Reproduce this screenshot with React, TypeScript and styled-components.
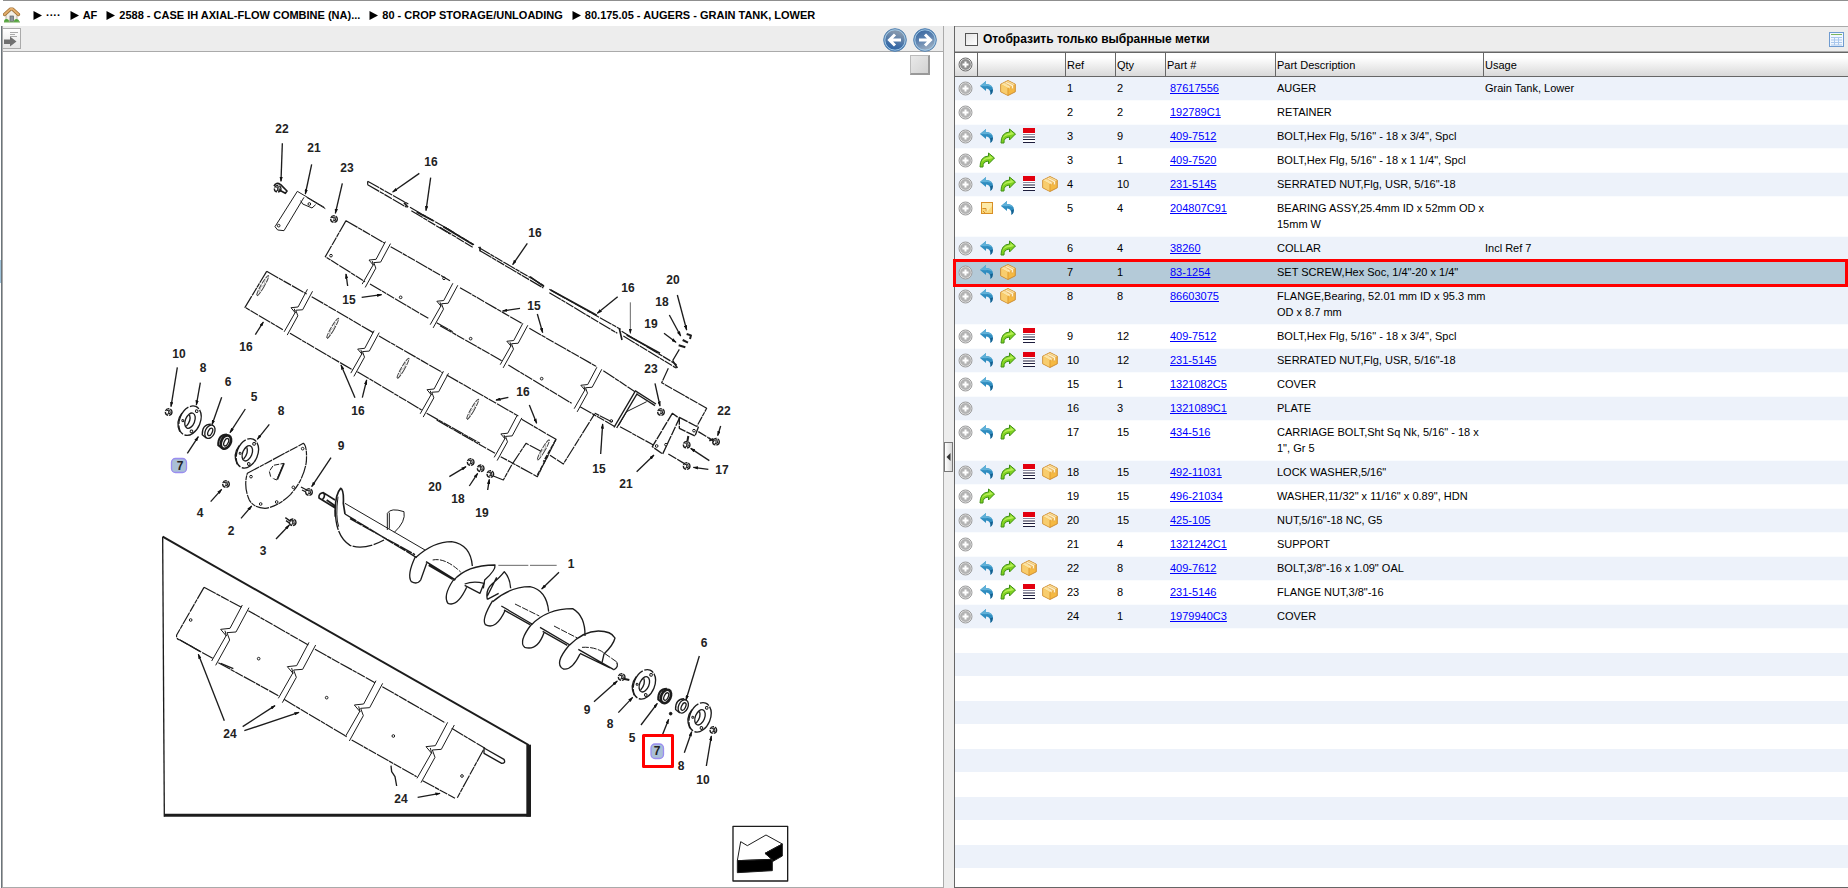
import React, { useId, useState } from 'react';
import styled, { createGlobalStyle, css } from 'styled-components';

const Global = createGlobalStyle`
  *, *::before, *::after { box-sizing: border-box; }
  html, body { margin: 0; padding: 0; }
  body {
    background: #ededed;
    color: #000;
    font: 11px/16px "Liberation Sans", Arial, sans-serif;
  }
`;

const Page = styled.div`
  min-height: 100vh;
  display: flex;
  flex-direction: column;
`;

/* ---------- breadcrumb ---------- */

const Breadcrumb = styled.nav`
  display: flex;
  align-items: center;
  gap: 9px;
  height: 26px;
  padding-top: 3px;
  margin-left: 3px;
  background: #fff;
  border-top: 1px solid #8f8f8f;
  box-shadow: -3px 0 0 #fff;
  flex: none;
`;

const HomeLink = styled.a`
  display: block;
  width: 18px;
  height: 16px;
  margin-right: 3px;
  line-height: 0;
`;

const Crumb = styled.a`
  display: flex;
  align-items: center;
  gap: 4px;
  color: #000;
  font-size: 11px;
  font-weight: bold;
  text-decoration: none;
  white-space: nowrap;
`;

/* ---------- split layout ---------- */

const Split = styled.div`
  flex: 1;
  display: grid;
  grid-template-columns: 3px minmax(0, 941fr) 10px minmax(0, 894fr);
`;

const EdgeStrip = styled.div`
  border-right: 1px solid #aaa;
  background:
    linear-gradient(#9fc3da, #9fc3da) 0 234px / 1px 23px no-repeat,
    linear-gradient(90deg, #fff 1px, #6b757b 1px);
`;

const DrawingPane = styled.section`
  display: flex;
  flex-direction: column;
  border: solid #aaa;
  border-width: 0 1px 1px 0;
  background: #fff;
`;

const DrawingToolbar = styled.div`
  flex: none;
  display: flex;
  justify-content: space-between;
  height: 26px;
  padding: 2px 6px 0 0;
  background: #ededed;
  border-bottom: 1px solid #aaa;
`;

const ToolButton = styled.button`
  width: 18px;
  height: 21px;
  padding: 0;
  border: solid #aaa;
  border-width: 1px 1px 1px 0;
  background: linear-gradient(#fff, #e4e4e4);
  line-height: 0;
`;

const NavButtons = styled.div`
  display: flex;
  gap: 6px;
`;

const RoundButton = styled.button`
  width: 24px;
  height: 24px;
  padding: 0;
  border: 0;
  background: none;
  line-height: 0;
`;

const Canvas = styled.div`
  position: relative;
  flex: 1;
  line-height: 0;
`;

const FitButton = styled.button`
  position: absolute;
  top: 3px;
  right: 13px;
  width: 20px;
  height: 20px;
  padding: 0;
  border: solid;
  border-width: 1px 2px 2px 1px;
  border-color: #bbb #999 #999 #bbb;
  background: linear-gradient(135deg, #e9e9e9, #d2d2d2);
`;

const Gutter = styled.div`
  display: flex;
  align-items: center;
  background: #ededed;
`;

const GutterHandle = styled.button`
  width: 9px;
  height: 30px;
  padding: 0;
  border: 1px solid #777;
  background: linear-gradient(90deg, #fff, #d8d8d8);
  line-height: 0;
`;

const PartsPane = styled.section`
  display: flex;
  flex-direction: column;
  border: solid #666;
  border-width: 0 0 1px 1px;
  background: #fff;
`;

const PartsToolbar = styled.div`
  flex: none;
  display: flex;
  align-items: center;
  justify-content: space-between;
  height: 26px;
  padding: 0 4px 0 10px;
  background: #ededed;
  border: solid #aaa;
  border-width: 1px 0;
`;

const FilterLabel = styled.label`
  display: flex;
  align-items: center;
  gap: 5px;
  font-size: 12px;
  font-weight: bold;
`;

const FilterBox = styled.input`
  appearance: none;
  width: 13px;
  height: 13px;
  margin: 0;
  border: 1px solid #555;
  background: linear-gradient(135deg, #e4e4e4, #fff);
  &:checked { background: #5a87b8; }
`;

const IconButton = styled.button`
  display: block;
  padding: 0;
  border: 0;
  background: none;
  line-height: 0;
`;

/* ---------- parts table ---------- */

const Table = styled.table`
  flex: none;
  width: 100%;
  table-layout: fixed;
  border-collapse: separate;
  border-spacing: 0;
`;

const Col = styled.col<{ $w?: number }>`
  ${({ $w }) => $w && css`width: ${$w}px;`}
`;

const HeadCell = styled.th<{ $mid?: boolean }>`
  height: 25px;
  padding: 0 1px;
  border: solid #666;
  border-width: 1px 1px 1px 0;
  background: linear-gradient(#fff 20%, #d9d9d9);
  font-weight: normal;
  text-align: left;
  &:last-child { border-right: 0; }
  ${({ $mid }) => $mid && css`padding: 0 3px;`}
`;

const Row = styled.tr<{ $shaded: boolean; $selected?: boolean }>`
  background: ${({ $shaded, $selected }) =>
    $selected ? '#b4cad8' : $shaded ? '#edf2fa' : '#fff'};
  ${({ $selected }) =>
    $selected &&
    css`
      position: relative;
      td { border-bottom-color: #b4cad8; }
      td:first-child::after {
        content: "";
        position: absolute;
        inset: -2px 0 -2px -2px;
        border: 3px solid #f00;
        pointer-events: none;
      }
    `}
`;

const Cell = styled.td<{ $inset?: boolean }>`
  padding: 3px 0 4px 1px;
  padding-left: ${({ $inset }) => ($inset ? 4 : 1)}px;
  border-bottom: 1px solid #fafcfe;
  vertical-align: top;
  white-space: pre;
`;

const IconRow = styled.div`
  display: flex;
  align-items: center;
  gap: 5px;
  height: 16px;
`;

const ExpandButton = styled(IconButton)`
  margin: 1px 0 0 2px;
`;

const PartLink = styled.a`
  color: #00f;
`;

const EmptyRows = styled.div`
  flex: 1;
  background: repeating-linear-gradient(#fff 0 24px, #edf2fa 24px 47px, #fff 47px 48px);
`;

/* ---------- icons ---------- */

const Home = () => (
  <svg width="18" height="16" viewBox="0 0 18 16">
    <path d="M3 8v6h11V8L8.500 3z" fill="#f3efe6" stroke="#a9a190" strokeWidth=".8" />
    <path d="M1.500 7.500l6-5.500h2l6 5.500" fill="none" stroke="#9a6a2c" strokeWidth="3.200" strokeLinejoin="round" strokeLinecap="round" />
    <path d="M1.500 7.500l6-5.500h2l6 5.500" fill="none" stroke="#e3ad6b" strokeWidth="1.800" strokeLinejoin="round" strokeLinecap="round" />
    <rect x="7" y="9" width="3.500" height="5.500" fill="#8d949b" stroke="#5c6268" strokeWidth=".7" />
    <path d="M1 15q0-3 2.500-3t2.500 2.700zM11 15q0-3 2.500-3t3 2.700z" fill="#4fa53c" />
    <path d="M1 15h16" stroke="#6aa84f" strokeWidth="1" />
  </svg>
);

const Wedge = () => (
  <svg width="9" height="9" viewBox="0 0 9 9">
    <path d="M.5 0L9 4.500.5 9z" fill="#000" />
  </svg>
);

const PaneArrow = () => (
  <svg width="17" height="19" viewBox="0 0 17 19">
    <path d="M7 3.500h8M7 5.500h5M7 7.500h7" stroke="#aaa" />
    <path d="M1 10.500h6V7.500l6.500 5-6.500 5V15H1z" fill="#707070" />
  </svg>
);

const RoundArrow = ({ forward }: { forward?: boolean }) => {
  const id = useId();
  return (
    <svg width="24" height="24" viewBox="0 0 24 24">
      <defs>
        <linearGradient id={id} x1="0" y1="0" x2={forward ? '.4' : '-.3'} y2="1">
          <stop offset="0" stopColor={forward ? '#2d5f9c' : '#8296ad'} />
          <stop offset=".55" stopColor={forward ? '#5e83b0' : '#3c6ca6'} />
          <stop offset="1" stopColor={forward ? '#9aacc0' : '#1f5ea6'} />
        </linearGradient>
      </defs>
      <circle cx="12" cy="12" r="11.300" fill={`url(#${id})`} stroke="#5484b4" strokeWidth="1" />
      <circle cx="12" cy="12" r="10.200" fill="none" stroke="#a3cbe8" strokeWidth="1" />
      <path
        d="M18 12H7.500M12 6.500L6.500 12l5.500 5.500"
        fill="none"
        stroke="#fff"
        strokeWidth="3"
        transform={forward ? 'rotate(180 12 12)' : undefined}
      />
    </svg>
  );
};

const Plus = ({ dark }: { dark?: boolean }) => (
  <svg width="15" height="15" viewBox="0 0 15 15">
    <circle cx="7.500" cy="7.500" r="6.500" fill="#e6e6e6" stroke={dark ? '#6f6f6f' : '#9d9d9d'} />
    <circle cx="7.500" cy="7.500" r="5" fill={dark ? '#8f8f8f' : '#b4b4b4'} stroke={dark ? '#7d7d7d' : '#a6a6a6'} strokeWidth=".6" />
    <path d="M7.500 4.500v6M4.500 7.500h6" stroke="#fff" strokeWidth="2" />
  </svg>
);

const Back = () => (
  <svg width="16" height="16" viewBox="0 0 16 16">
    <path d="M1 6l6-5v3q7 .5 7 6-.3 3-2.500 5 .5-6-4.500-6.500V11z" fill="#2f8dc0" />
    <path d="M1 6l6-5v3q5 .3 6.300 3.500Q10 5.300 6.500 6.300z" fill="#5fb0d8" />
    <path d="M14 9.500q0 3.500-2.500 5.500.5-3-.5-4.700z" fill="#15608f" />
  </svg>
);

const Forward = () => (
  <svg width="16" height="16" viewBox="0 0 16 16">
    <path
      d="M15.500 6L9.500 1v3Q1 4.500 1 15h3q-.5-5.500 5.500-6v3z"
      fill="#7fd11f"
      stroke="#3f8f16"
      strokeWidth="1"
      strokeLinejoin="round"
    />
    <path d="M14 6l-3.500-3v2Q4 5.500 2.500 10.500 5 6.800 10.500 7z" fill="#b5ee55" />
  </svg>
);

const List = () => (
  <svg width="16" height="16" viewBox="0 0 16 16">
    <rect x="2" y="0" width="12" height="15" fill="#fff" />
    <rect x="2" y="0" width="12" height="5" fill="#e3000f" />
    <path d="M2 6.500h12" stroke="#8a8aa0" />
    <path d="M2 9h12M2 11.500h12M2 14.500h12" stroke="#1d1d3c" />
  </svg>
);

const Box = () => (
  <svg width="16" height="16" viewBox="0 0 16 16">
    <path d="M8 .5l7.300 3.700v7.600L8 15.500.7 11.800V4.200z" fill="#f5b942" stroke="#c8862a" strokeWidth=".9" strokeLinejoin="round" />
    <path d="M8 .9L14.900 4.300 8 8 1.100 4.300z" fill="#fbe3a3" />
    <path d="M1.200 4.600L7.700 8v7L1.200 11.600z" fill="#f8cd6e" />
    <path d="M4.500 2.700L11.500 6.200v3l2-1V5.100L6.500 1.700zM7 4.500l3 1.500v3" fill="#fff3cf" stroke="#e0a03c" strokeWidth=".5" />
    <path d="M8 8v7.200" stroke="#d9942f" strokeWidth=".7" />
  </svg>
);

const Note = () => (
  <svg width="16" height="16" viewBox="0 0 16 16">
    <rect x="2.500" y="2.500" width="11" height="11" fill="#fbd87a" stroke="#d88f26" />
    <path d="M3 3h10v3L8 12H6V8H3z" fill="#fdeaa9" />
    <path d="M3.500 8.500h3.500v3M4 11l2 2" fill="none" stroke="#d88f26" />
  </svg>
);

const Grid = () => (
  <svg width="15" height="15" viewBox="0 0 15 15">
    <rect x=".5" y=".5" width="14" height="14" fill="#f2f8ff" stroke="#6f9bd0" />
    <path d="M2 2.500h11" stroke="#7cb55c" />
    <path d="M2 5.500h11M2 8h11M2 10.500h11M2 13h11M5.500 5v8M9.500 5v8" stroke="#a9c7ec" />
  </svg>
);

const markers = { b: Back, f: Forward, l: List, p: Box, n: Note };

/* ---------- exploded drawing ---------- */

const Sheet = styled.svg`
  display: block;
  width: 100%;
  height: auto;
  fill: none;
  stroke: #1c1c1c;
  stroke-width: 3;
  stroke-linejoin: round;

  text {
    fill: #222;
    stroke: none;
    font: bold 12px "Liberation Sans", Arial, sans-serif;
    text-anchor: middle;
  }
`;

const Outline = styled.path`
  stroke-dasharray: 40 2 14 2 26 3;
  stroke-width: 3.6px;
`;

/** A part drawing group; coordinates inside are thirds of a pixel. */
const Region = ({ x, y, children }: { x: number; y: number; children: React.ReactNode }) => (
  <g transform={`translate(${x} ${y}) scale(.33333)`}>{children}</g>
);

const Leaders = ({ d }: { d: number[][] }) => (
  <>
    {d.map(([x1, y1, x2, y2], i) => (
      <path key={i} d={`M${x1} ${y1}L${x2} ${y2}`} strokeWidth="4" markerEnd="url(#tip)" />
    ))}
  </>
);

const Breaks = ({ at, s }: { at: number[][]; s: number }) => (
  <>
    {at.map(([x, y], i) => (
      <g key={i} transform={`translate(${x} ${y}) scale(${s})`} strokeWidth={3 / s}>
        <path d="M-10-3L-47 67L-75 70L-58 90L-62 74M-58 88L-102 165" />
        <path d="M10 5L-29 78L-56 80L-48 102L-90 178" />
      </g>
    ))}
  </>
);

const Slots = ({ at }: { at: number[][] }) => (
  <>
    {at.map(([x, y], i) => (
      <g key={i} transform={`translate(${x} ${y}) rotate(30)`}>
        <ellipse rx="5" ry="35" strokeDasharray="16 3" strokeWidth="3" stroke="#444" />
        <path d="M-3-20L3-5L-3 8L2 22" stroke="#999" strokeWidth="2" />
      </g>
    ))}
  </>
);

const Nuts = ({ at }: { at: number[][] }) => (
  <>
    {at.map(([x, y], i) => (
      <g key={i} transform={`translate(${x} ${y})`}>
        <circle r="10" strokeWidth="4" strokeDasharray="14 3" />
        <path d="M-6-4L3-6L5 4L-4 6M0-4V5" strokeWidth="3" />
      </g>
    ))}
  </>
);

const Dots = ({ at }: { at: number[][] }) => (
  <>
    {at.map(([x, y], i) => (
      <circle key={i} cx={x} cy={y} r="4" strokeWidth="3" />
    ))}
  </>
);

const Flange = ({ x, y }: { x: number; y: number }) => (
  <g transform={`translate(${x} ${y}) rotate(22)`}>
    <ellipse rx="31" ry="46" strokeWidth="4" strokeDasharray="60 5 30 4" />
    <path d="M-31-12Q-40 20-16 42" strokeWidth="4" />
    <ellipse rx="14" ry="24" strokeWidth="4" />
    <path d="M-8-16Q4-2-4 20" strokeWidth="4" />
    <circle cx="8" cy="-34" r="4" />
    <circle cx="16" cy="28" r="4" />
    <circle cx="-20" cy="8" r="3" />
  </g>
);

const Bearing = ({ x, y, thick }: { x: number; y: number; thick?: boolean }) => (
  <g transform={`translate(${x} ${y}) rotate(25)`}>
    <path d="M-4-22Q-28-10-14 18L2 22" strokeWidth={thick ? 6 : 4} />
    <ellipse cx="3" rx="14" ry="21" strokeWidth={thick ? 8 : 4} />
    <ellipse cx="4" rx="6" ry="12" strokeWidth="4" />
  </g>
);

const callouts: [string, number, number][] = [
  ['22', 282, 129], ['21', 314, 148], ['23', 347, 168], ['16', 431, 162], ['15', 349, 300],
  ['16', 246, 347], ['10', 179, 354], ['8', 203, 368], ['6', 228, 382], ['16', 535, 233],
  ['16', 628, 288], ['20', 673, 280], ['18', 662, 302], ['19', 651, 324], ['15', 534, 306],
  ['23', 651, 369], ['16', 523, 392], ['22', 724, 411], ['15', 599, 469], ['17', 722, 470],
  ['21', 626, 484], ['16', 358, 411], ['5', 254, 397], ['8', 281, 411], ['9', 341, 446],
  ['4', 200, 513], ['2', 231, 531], ['3', 263, 551], ['20', 435, 487], ['18', 458, 499],
  ['19', 482, 513], ['24', 230, 734], ['24', 401, 799], ['1', 571, 564], ['6', 704, 643],
  ['9', 587, 710], ['8', 610, 724], ['5', 632, 738], ['8', 681, 766], ['10', 703, 780],
];

const Drawing = () => (
  <Sheet viewBox="3 52 940 835" role="img" aria-label="Augers - grain tank, lower">
    <defs>
      <marker id="tip" viewBox="0 0 16 10" refX="14" refY="5" markerWidth="16" markerHeight="10" markerUnits="userSpaceOnUse" orient="auto">
        <path d="M0 0L16 5L0 10z" fill="#111" stroke="none" />
      </marker>
    </defs>

    {/* cover plates and brackets, upper left */}
    <Region x={150} y={110}>
      <Leaders
        d={[
          [397, 100, 393, 214], [485, 163, 466, 252], [577, 220, 556, 310], [808, 190, 728, 246],
          [842, 203, 828, 302], [593, 528, 588, 492], [635, 562, 695, 554], [316, 674, 340, 636],
        ]}
      />
      <Nuts at={[[552, 327], [383, 236]]} />
      <path d="M372 228Q378 215 392 224L411 243L406 250L388 240" strokeWidth="5" />
      <path d="M442 244L375 350L383 360L402 362L462 262M442 244L523 292M470 262L526 296M452 272L458 282L486 294L497 284" />
      <Dots at={[[386, 347], [478, 282], [543, 437], [752, 562], [882, 505]]} />
      <Outline d="M653 214L775 282M653 224L770 292M653 214V224M780 292L910 366M784 302L900 372" />
      <path d="M762 278L774 292M800 306L850 332" strokeWidth="5" />
      <Outline d="M588 332L526 440L645 515M588 332L705 400M722 410L900 512M660 522L835 625M860 638L908 665" />
      <Outline d="M350 484L285 592L400 660M350 484L470 552M485 560L670 668M420 670L608 780M687 678L878 788" />
      <Breaks at={[[714, 397], [480, 540], [680, 664], [888, 786]]} s={0.76} />
      <Slots at={[[338, 527], [548, 655], [759, 775]]} />
    </Region>

    {/* cover plates and brackets, upper right */}
    <Region x={440} y={140}>
      <Leaders
        d={[
          [262, 310, 218, 374], [533, 470, 472, 520], [688, 525, 722, 588], [712, 465, 740, 570],
          [672, 580, 708, 607], [240, 505, 188, 513], [292, 522, 308, 578], [645, 730, 660, 798],
          [205, 772, 168, 780], [268, 795, 290, 850], [482, 942, 488, 852], [590, 995, 642, 945],
          [842, 858, 833, 887], [808, 962, 752, 925], [805, 988, 760, 982], [28, 1010, 78, 980],
          [88, 1038, 113, 1000], [143, 1050, 148, 1018],
        ]}
      />
      <path d="M571 487V580" strokeWidth="2" markerEnd="url(#tip)" />
      <Outline d="M15 262L102 314M0 262L98 322M115 322L312 437M120 332L310 444M328 448L542 568M328 458L532 580M545 574L710 674M550 588L708 684" />
      <path d="M10 260L100 314M270 410L312 440M332 450L470 526M560 585L660 640M698 662L712 684M120 320V334M538 566L546 600" strokeWidth="5" />
      <Outline d="M60 443L245 550M0 557L185 662M268 565L470 680M205 675L395 790M490 692L585 755M420 800L525 860" />
      <Breaks at={[[46, 432], [256, 552], [478, 684], [238, 830]]} s={0.74} />
      <path d="M585 755L522 862M592 760L530 864M585 752L648 792M590 762L645 797" strokeWidth="4" />
      <path d="M620 785L560 815L535 858" />
      <Dots at={[[92, 596], [305, 716], [514, 843], [650, 918], [678, 914], [762, 872]]} />
      <Outline d="M515 845L465 820L370 972L330 946M540 860L640 915M718 628L698 662M685 685L665 728L800 805L770 860" />
      <Outline d="M20 705L235 828M-10 840L165 940M245 838L348 898L292 1010L182 950M160 1008L190 1020L215 975L258 910L305 935" />
      <path d="M348 898L310 965M325 945L292 1005" strokeWidth="4" strokeDasharray="14 4" />
      <Slots at={[[98, 808], [310, 930]]} />
      <path d="M697 820L637 920L668 942L718 835zM718 832L775 862L765 888L718 865zM775 875L805 893M685 942L732 970" strokeWidth="4" strokeDasharray="28 3" />
      <path d="M716 616L736 622M728 600L744 608M740 582L753 586L750 597" strokeWidth="6" />
      <path d="M745 888L742 905" strokeWidth="6" />
      <Nuts at={[[663, 816], [740, 978], [740, 914], [828, 905], [92, 966], [122, 985], [151, 1002]]} />
      <path d="M805 893L822 905M808 902L820 896" strokeWidth="5" />
    </Region>

    {/* bearings, end cover and first auger flight */}
    <Region x={150} y={330}>
      <Leaders
        d={[
          [82, 112, 63, 230], [151, 158, 139, 225], [215, 202, 186, 284], [286, 237, 240, 308],
          [358, 283, 322, 328], [112, 370, 145, 320], [543, 383, 485, 470], [182, 515, 215, 478],
          [273, 565, 305, 528], [378, 627, 418, 585], [615, 203, 573, 105], [637, 203, 650, 150],
        ]}
      />
      <Outline d="M830 250L990 340" />
      <Nuts at={[[56, 246], [228, 462], [477, 486], [428, 577]]} />
      <path d="M453 471L470 480M456 480L468 486M406 563L422 574M408 572L420 580" strokeWidth="4" />
      <Flange x={120} y={272} />
      <Bearing x={177} y={304} />
      <Bearing x={225} y={335} thick />
      <Flange x={292} y={370} />
      <Outline d="M622 125L815 240" />
      <Outline d="M292 430L460 340Q472 348 469 395Q462 448 422 493Q385 530 345 535Q310 533 298 510Q280 470 292 430z" />
      <path d="M362 440L358 424L370 406L402 400L380 450L366 444" strokeDasharray="16 4" strokeWidth="3" />
      <path d="M402 400L382 448" strokeWidth="5" />
      <Dots at={[[458, 356], [303, 440], [430, 472], [380, 516], [332, 522]]} />
      <path d="M555 510L520 488Q505 490 507 504L556 534M520 488Q528 496 518 508M530 510L556 528" strokeWidth="5" />
      <path d="M556 560Q553 495 572 475Q582 480 580 520L585 552" strokeWidth="5" />
      <path d="M564 500Q556 560 566 590" />
      <path d="M556 540Q556 618 600 646Q642 662 702 630" strokeWidth="4" strokeDasharray="60 4" />
      <path d="M585 520L825 660" />
      <path d="M585 552L800 683M600 566L795 674" strokeWidth="4" strokeDasharray="40 3" />
      <path d="M712 600V550Q722 532 762 545Q768 575 733 607M718 548V596" />
    </Region>

    {/* inset panel and middle auger flights */}
    <Region x={150} y={520}>
      <path d="M38 50L1136 675" strokeWidth="6" />
      <path d="M38 50L43 890" strokeWidth="4" />
      <path d="M43 886H1142" strokeWidth="9" />
      <path d="M1136 674V890" strokeWidth="14" />
      <Outline d="M162 202L80 345Q78 358 90 360L188 415M162 202L275 262M295 272L475 375M495 388L675 488M697 500L885 608M905 625L1005 685" />
      <Outline d="M205 428L385 527M402 538L590 650M605 660L800 770M818 782L915 835M1000 690L922 833" />
      <path d="M90 360L150 394M212 430L250 446M1002 684L1062 718Q1068 730 1055 730L1002 700z" strokeWidth="4" />
      <Breaks at={[[287, 258], [487, 370], [688, 485], [903, 610]]} s={1} />
      <Dots at={[[122, 300], [326, 416], [530, 533], [730, 648], [936, 768]]} />
      <Leaders d={[[223, 602, 145, 403], [278, 620, 375, 557], [283, 632, 447, 577], [803, 832, 870, 820]]} />
      <path d="M740 798L735 770L725 755L723 737" strokeWidth="4" />
      <path d="M798 112Q850 65 905 65Q962 74 967 138" strokeWidth="4" />
      <path d="M796 110Q770 165 784 185Q802 195 812 180L830 130" strokeWidth="4" />
      <path d="M828 125L916 180M836 136L908 178" strokeWidth="5" />
      <path d="M848 120Q885 112 932 156" strokeDasharray="18 4" />
      <path d="M910 182Q950 135 1035 135Q1038 150 1004 180L1000 205" strokeWidth="4" />
      <path d="M910 180Q878 228 894 250Q922 262 950 202" strokeWidth="4" />
      <path d="M944 192Q970 182 1002 190L990 220L944 196" strokeWidth="4" />
      <path d="M1012 238Q1006 210 1026 192Q1050 172 1063 155Q1080 172 1082 205M1040 172L1012 228M1012 238L1046 220" strokeWidth="4" />
    </Region>

    {/* right-hand auger flights and bearings */}
    <Region x={450} y={530}>
      <path d="M128 215Q180 170 240 170Q290 180 296 245" strokeWidth="4" />
      <path d="M128 212Q94 268 106 284Q138 302 166 240" strokeWidth="4" />
      <path d="M154 228L246 282M162 240L240 284" strokeWidth="4" />
      <path d="M195 222L268 258M312 288L382 324M396 352Q430 350 455 364L502 397" strokeDasharray="20 4" />
      <path d="M244 285Q290 236 368 236Q406 258 405 318" strokeWidth="4" />
      <path d="M245 282Q204 335 224 352Q262 364 282 308" strokeWidth="4" />
      <path d="M270 292L360 345M278 304L352 346" strokeWidth="4" />
      <path d="M358 346Q400 303 445 303Q484 303 495 324Q490 345 462 372L456 398" strokeWidth="4" />
      <path d="M358 345Q310 402 340 417Q366 422 390 372" strokeWidth="4" />
      <path d="M385 358L490 418M390 370L480 414M500 397Q508 410 490 420" strokeWidth="4" />
      <path d="M320 106H240M235 106H145" strokeWidth="2" />
      <Nuts at={[[515, 441], [790, 600]]} />
      <path d="M520 446L538 450" strokeWidth="6" />
      <Flange x={583} y={463} />
      <Bearing x={645} y={498} thick />
      <Bearing x={697} y={528} />
      <Flange x={750} y={562} />
      <circle cx="662" cy="551" r="4" fill="#111" />
      <Leaders
        d={[
          [327, 127, 275, 177], [432, 515, 502, 453], [505, 548, 548, 502], [573, 585, 622, 520],
          [748, 378, 708, 510], [635, 620, 656, 568], [703, 668, 725, 605], [769, 708, 784, 618],
        ]}
      />
      <rect x="849" y="889" width="164" height="164" strokeWidth="4" />
      <path d="M872 935L892 947L948 915L997 942L945 970L967 988L862 992z" />
      <path d="M862 992L967 988V1022L862 1028zM945 970L997 942V978L967 995L962 985z" fill="#000" />
    </Region>

    {callouts.map(([n, x, y], i) => (
      <text key={i} x={x} y={y + 4}>{n}</text>
    ))}

    <g stroke="#9a8df0" strokeWidth="1.300" fill="#a9bfd6">
      <rect x="171.500" y="458.500" width="15" height="14" rx="4" />
      <rect x="651" y="744" width="12.500" height="14.500" rx="4" />
    </g>
    <text x="180" y="470">7</text>
    <text x="657" y="755">7</text>
    <rect x="643.500" y="735.500" width="29" height="31" stroke="#f00" strokeWidth="3" />
  </Sheet>
);

/* ---------- data ---------- */

type Part = { icons: string; ref: string; qty: string; no: string; desc: string; usage?: string };

const p = (icons: string, ref: string, qty: string, no: string, desc: string, usage?: string): Part => ({
  icons, ref, qty, no, desc, usage,
});

const parts: Part[] = [
  p('bp', '1', '2', '87617556', 'AUGER', 'Grain Tank, Lower'),
  p('', '2', '2', '192789C1', 'RETAINER'),
  p('bfl', '3', '9', '409-7512', 'BOLT,Hex Flg, 5/16" - 18 x 3/4", Spcl'),
  p('f', '3', '1', '409-7520', 'BOLT,Hex Flg, 5/16" - 18 x 1 1/4", Spcl'),
  p('bflp', '4', '10', '231-5145', 'SERRATED NUT,Flg, USR, 5/16"-18'),
  p('nb', '5', '4', '204807C91', 'BEARING ASSY,25.4mm ID x 52mm OD x\n15mm W'),
  p('bf', '6', '4', '38260', 'COLLAR', 'Incl Ref 7'),
  p('bp', '7', '1', '83-1254', 'SET SCREW,Hex Soc, 1/4"-20 x 1/4"'),
  p('bp', '8', '8', '86603075', 'FLANGE,Bearing, 52.01 mm ID x 95.3 mm\nOD x 8.7 mm'),
  p('bfl', '9', '12', '409-7512', 'BOLT,Hex Flg, 5/16" - 18 x 3/4", Spcl'),
  p('bflp', '10', '12', '231-5145', 'SERRATED NUT,Flg, USR, 5/16"-18'),
  p('b', '15', '1', '1321082C5', 'COVER'),
  p('', '16', '3', '1321089C1', 'PLATE'),
  p('bf', '17', '15', '434-516', 'CARRIAGE BOLT,Sht Sq Nk, 5/16" - 18 x\n1", Gr 5'),
  p('bflp', '18', '15', '492-11031', 'LOCK WASHER,5/16"'),
  p('f', '19', '15', '496-21034', 'WASHER,11/32" x 11/16" x 0.89", HDN'),
  p('bflp', '20', '15', '425-105', 'NUT,5/16"-18 NC, G5'),
  p('', '21', '4', '1321242C1', 'SUPPORT'),
  p('bfp', '22', '8', '409-7612', 'BOLT,3/8"-16 x 1.09" OAL'),
  p('bflp', '23', '8', '231-5146', 'FLANGE NUT,3/8"-16'),
  p('b', '24', '1', '1979940C3', 'COVER'),
];

const crumbs = [
  '····',
  'AF',
  '2588 - CASE IH AXIAL-FLOW COMBINE (NA)...',
  '80 - CROP STORAGE/UNLOADING',
  '80.175.05 - AUGERS - GRAIN TANK, LOWER',
];

export default function App() {
  const [onlySelected, setOnlySelected] = useState(false);

  return (
    <Page>
      <Global />
      <Breadcrumb aria-label="Breadcrumb">
        <HomeLink href="#" aria-label="Home"><Home /></HomeLink>
        {crumbs.map((c) => (
          <Crumb key={c} href="#"><Wedge />{c}</Crumb>
        ))}
      </Breadcrumb>
      <Split>
        <EdgeStrip />
        <DrawingPane>
          <DrawingToolbar>
            <ToolButton aria-label="Show navigation"><PaneArrow /></ToolButton>
            <NavButtons>
              <RoundButton aria-label="Previous"><RoundArrow /></RoundButton>
              <RoundButton aria-label="Next"><RoundArrow forward /></RoundButton>
            </NavButtons>
          </DrawingToolbar>
          <Canvas>
            <Drawing />
            <FitButton aria-label="Overview" />
          </Canvas>
        </DrawingPane>
        <Gutter>
          <GutterHandle aria-label="Collapse">
            <svg width="7" height="8" viewBox="0 0 7 8"><path d="M5.500 0v8L1.500 4z" fill="#333" /></svg>
          </GutterHandle>
        </Gutter>
        <PartsPane>
          <PartsToolbar>
            <FilterLabel>
              <FilterBox
                type="checkbox"
                checked={onlySelected}
                onChange={(e) => setOnlySelected(e.target.checked)}
              />
              Отобразить только выбранные метки
            </FilterLabel>
            <IconButton aria-label="Columns"><Grid /></IconButton>
          </PartsToolbar>
          <Table>
            <colgroup>
              <Col $w={23} /><Col $w={88} /><Col $w={50} /><Col $w={50} /><Col $w={110} /><Col $w={208} /><Col />
            </colgroup>
            <thead>
              <tr>
                <HeadCell $mid><IconButton aria-label="Expand all"><Plus dark /></IconButton></HeadCell>
                <HeadCell />
                <HeadCell>Ref</HeadCell>
                <HeadCell>Qty</HeadCell>
                <HeadCell>Part #</HeadCell>
                <HeadCell>Part Description</HeadCell>
                <HeadCell>Usage</HeadCell>
              </tr>
            </thead>
            <tbody>
              {parts.map((part, i) => (
                <Row key={i} $shaded={i % 2 === 0} $selected={part.ref === '7'}>
                  <Cell><ExpandButton aria-label="Expand"><Plus /></ExpandButton></Cell>
                  <Cell>
                    <IconRow>
                      {part.icons.split('').map((k) => {
                        const Icon = markers[k as keyof typeof markers];
                        return <Icon key={k} />;
                      })}
                    </IconRow>
                  </Cell>
                  <Cell>{part.ref}</Cell>
                  <Cell>{part.qty}</Cell>
                  <Cell $inset><PartLink href="#">{part.no}</PartLink></Cell>
                  <Cell>{part.desc}</Cell>
                  <Cell>{part.usage}</Cell>
                </Row>
              ))}
            </tbody>
          </Table>
          <EmptyRows />
        </PartsPane>
      </Split>
    </Page>
  );
}
